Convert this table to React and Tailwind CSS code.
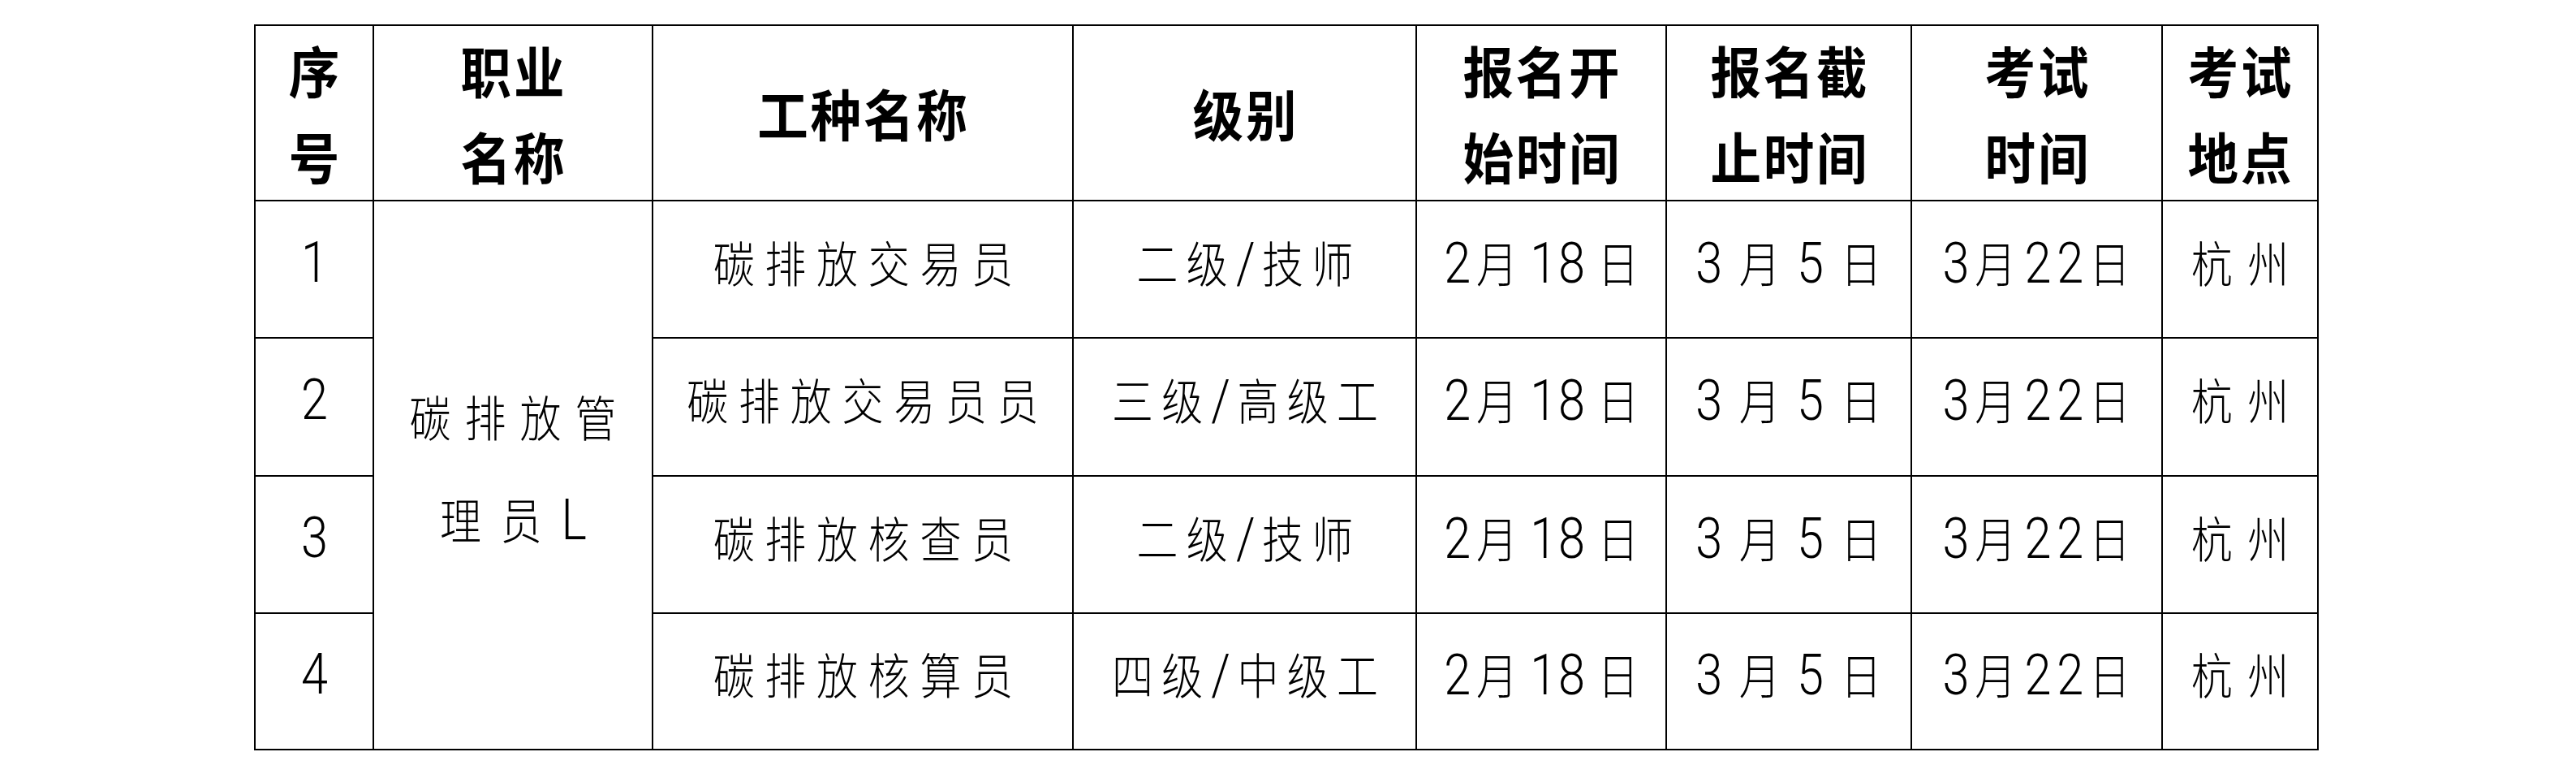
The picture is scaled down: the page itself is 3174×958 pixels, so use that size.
import React from 'react';
import clsx from 'clsx';

const cell = 'flex items-center justify-center border-r-2 border-b-2 border-black';
const numFont = 'font-[Roboto,sans-serif] font-light text-[70px]';
const cjkFont = "font-['Noto_Sans_CJK_SC',sans-serif] font-light text-[60px]";

// header cell: bold hei-style text, one or two lines
const Head = ({ lines }) => (
  <div className={clsx(cell, 'flex-col')}>
    {lines.map((l, i) => (
      <span
        key={i}
        className="inline-block scale-x-[0.92] pl-[3px] tracking-[3px] whitespace-nowrap font-['Noto_Sans_CJK_SC',sans-serif] font-bold text-[68px] leading-[106px] text-black"
      >
        {l}
      </span>
    ))}
  </div>
);

// body text: latin runs in a light sans, CJK runs in Noto, whole line condensed
const Txt = ({ text, cjk = 'tracking-[15px]', num = 'tracking-[3px]', pad = 'pl-[15px]' }) => {
  const parts = text.split(/([0-9A-Za-z/]+)/).filter(Boolean);
  return (
    <span className={clsx('inline-block scale-x-[0.85] whitespace-nowrap text-black leading-[106px]', pad)}>
      {parts.map((p, i) =>
        /[0-9A-Za-z/]/.test(p) ? (
          <span key={i} className={clsx(numFont, num)}>
            {p}
          </span>
        ) : (
          <span key={i} className={clsx(cjkFont, cjk)}>
            {p}
          </span>
        )
      )}
    </span>
  );
};

// date cell "2月18日" with hand-set gaps between runs
const Date2 = () => (
  <span className="inline-block scale-x-[0.85] whitespace-nowrap text-black leading-[106px]">
    <span className={clsx(numFont, 'mr-[8px]')}>2</span>
    <span className={clsx(cjkFont, 'mr-[18px]')}>月</span>
    <span className={clsx(numFont, 'tracking-[2px] mr-[16px]')}>18</span>
    <span className={cjkFont}>日</span>
  </span>
);

const rows = [
  ['1', '碳排放交易员', '二级/技师'],
  ['2', '碳排放交易员员', '三级/高级工'],
  ['3', '碳排放核查员', '二级/技师'],
  ['4', '碳排放核算员', '四级/中级工'],
];

export default function App() {
  return (
    <div className="w-[3174px] h-[958px] bg-white pt-[30px] pl-[313px]">
      <div className="w-[2544px] grid grid-cols-[146px_344px_518px_423px_308px_302px_309px_192px] grid-rows-[216px_169px_170px_169px_168px] border-l-2 border-t-2 border-black">
        <Head lines={['序', '号']} />
        <Head lines={['职业', '名称']} />
        <Head lines={['工种名称']} />
        <Head lines={['级别']} />
        <Head lines={['报名开', '始时间']} />
        <Head lines={['报名截', '止时间']} />
        <Head lines={['考试', '时间']} />
        <Head lines={['考试', '地点']} />

        {rows.map(([no, name, level], i) => (
          <React.Fragment key={no}>
            <div className={cell}>
              <Txt text={no} num="tracking-[0px]" pad="pl-0" />
            </div>
            {i === 0 && (
              <div className={clsx(cell, 'row-span-4 flex-col')}>
                <Txt text="碳排放管" cjk="tracking-[20px]" pad="pl-[20px]" />
                <Txt text="理员L" cjk="tracking-[28px]" num="tracking-[0px]" pad="pl-0" />
              </div>
            )}
            <div className={cell}>
              <Txt text={name} />
            </div>
            <div className={cell}>
              <Txt text={level} cjk="tracking-[12px]" num="tracking-[10px]" pad="pl-[12px]" />
            </div>
            <div className={cell}>
              <Date2 />
            </div>
            <div className={cell}>
              <Txt text="3月5日" cjk="tracking-[24px]" num="tracking-[24px]" pad="pl-[24px]" />
            </div>
            <div className={cell}>
              <Txt text="3月22日" cjk="tracking-[12px]" num="tracking-[8px]" pad="pl-[12px]" />
            </div>
            <div className={cell}>
              <Txt text="杭州" cjk="tracking-[22px]" pad="pl-[22px]" />
            </div>
          </React.Fragment>
        ))}
      </div>
    </div>
  );
}
